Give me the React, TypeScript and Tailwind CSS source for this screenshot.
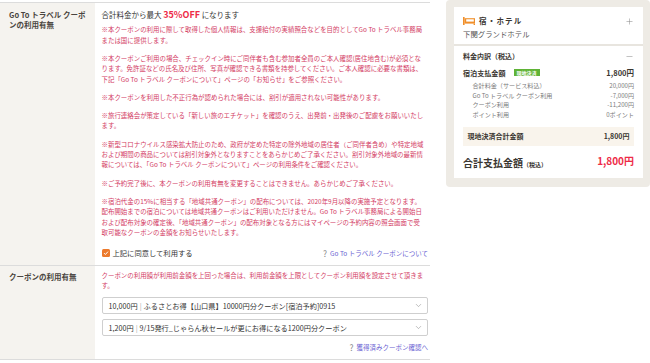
import { ChevronDown, Minus, Plus } from "lucide-react";

// Data
// -----------------------------------------------------------------------------

const notes: string[][] = [
  [
    "※本クーポンの利用に際して取得した個人情報は、支援給付の実績照合などを目的としてGo To トラベル事務局",
    "または国に提供します。",
  ],
  [
    "※本クーポンご利用の場合、チェックイン時にご同伴者も含む参加者全員のご本人確認(居住地含む)が必須とな",
    "ります。免許証などの氏名及び住所、写真が確認できる書類を持参してください。ご本人確認に必要な書類は、",
    "下記「Go To トラベル クーポンについて」ページの「お知らせ」をご参照ください。",
  ],
  ["※本クーポンを利用した不正行為が認められた場合には、割引が適用されない可能性があります。"],
  [
    "※旅行連絡会が策定している「新しい旅のエチケット」を確認のうえ、出発前・出発後のご配慮をお願いいたし",
    "ます。",
  ],
  [
    "※新型コロナウイルス感染拡大防止のため、政府が定めた特定の除外地域の居住者（ご同伴者含め）や特定地域",
    "および期間の商品については割引対象外となりますことをあらかじめご了承ください。割引対象外地域の最新情",
    "報については、「Go To トラベル クーポンについて」ページの利用条件をご確認ください。",
  ],
  ["※ご予約完了後に、本クーポンの利用有無を変更することはできません。あらかじめご了承ください。"],
  [
    "※宿泊代金の15%に相当する「地域共通クーポン」の配布については、2020年9月以降の実施予定となります。",
    "配布開始までの宿泊については地域共通クーポンはご利用いただけません。Go To トラベル事務局による開始日",
    "および配布対象の確定後、「地域共通クーポン」の配布対象となる方にはマイページの予約内容の照会画面で受",
    "取可能なクーポンの金額をお知らせいたします。",
  ],
];

const coupons = [
  { price: "10,000円", name: "ふるさとお得【山口県】10000円分クーポン[宿泊予約]0915" },
  { price: "1,200円", name: "9/15発行_じゃらん秋セールが更にお得になる1200円分クーポン" },
];

const breakdown = [
  ["合計料金（サービス料込）", "20,000円"],
  ["Go To トラベル クーポン利用", "-7,000円"],
  ["クーポン利用", "-11,200円"],
  ["ポイント利用", "0ポイント"],
];

// Pieces
// -----------------------------------------------------------------------------

function HelpLink({ label }: { label: string }) {
  return (
    <span className="flex items-center">
      <span className="mr-[3px] text-[8.5px] leading-[10px] text-[#8d8d8d]">?</span>
      <span className="text-[6.5px] leading-[10px] text-[#6b5fd3]">{label}</span>
    </span>
  );
}

function CouponSelect({ price, name }: { price: string; name: string }) {
  return (
    <div className="flex h-[17px] items-center justify-between rounded-[2px] border border-[#cfcfcf] pl-[6px] pr-[4px] text-[7.2px] text-[#333]">
      <span className="whitespace-nowrap">
        {price}
        <span className="mx-[2px] text-[#aaa]">|</span>
        {name}
      </span>
      <ChevronDown size={9} strokeWidth={1.5} className="text-[#8f8f8f]" />
    </div>
  );
}

function BedIcon() {
  return (
    <svg width="12" height="8" viewBox="0 0 12 8">
      <rect x="0" y="0" width="1.6" height="8" fill="#f08f2a" />
      <rect x="1.6" y="1.2" width="10.4" height="5.4" fill="#f08f2a" />
      <rect x="10.6" y="6.6" width="1.4" height="1.4" fill="#f08f2a" />
      <rect x="3.2" y="2.3" width="7.6" height="2.3" fill="#fff" />
    </svg>
  );
}

// Default export
// -----------------------------------------------------------------------------

export default function App() {
  return (
    <div className="flex h-[363px] w-[650px] overflow-hidden bg-white font-['Noto_Sans_CJK_JP','Noto_Sans',sans-serif] text-[#3a3631]">
      <div className="w-[430px] shrink-0 pt-[2px]">
        {/* Go To travel coupon */}
        <div className="flex border-t border-[#dcdcdc]">
          <div className="w-[95px] shrink-0 bg-[#f5f3ef] pl-[9px] pt-[7px] text-[7.5px] font-bold leading-[10px] text-[#4a4540]">
            Go To トラベル クーポ
            <br />
            ンの利用有無
          </div>
          <div className="flex-1 pb-[6px] pl-[6.5px] pr-[2px] pt-[6px]">
            <p className="text-[7.5px] leading-[12px] text-[#333]">
              合計料金から最大{" "}
              <span className="text-[9px] font-bold text-[#ee2b47]">35%OFF</span>{" "}
              になります
            </p>
            <div className="mt-[4.1px] text-[6.45px] leading-[10.4px] text-[#d33c64]">
              {notes.map((para, i) => (
                <p key={i} className={i > 0 ? "mt-[7.8px]" : ""}>
                  {para.map((line, j) => (
                    <span key={j} className="block whitespace-nowrap">
                      {line}
                    </span>
                  ))}
                </p>
              ))}
            </div>
            <div className="mt-[8.7px] flex h-[12px] items-center justify-between">
              <label className="flex items-center">
                <span className="flex h-[8px] w-[8px] items-center justify-center rounded-[1.5px] bg-[#ec7a2c]">
                  <svg width="6" height="6" viewBox="0 0 6 6">
                    <path d="M1 3.1l1.4 1.4L5 1.6" fill="none" stroke="#fff" strokeWidth="1" />
                  </svg>
                </span>
                <span className="ml-[3px] text-[7.3px] text-[#333]">上記に同意して利用する</span>
              </label>
              <HelpLink label="Go To トラベル クーポンについて" />
            </div>
          </div>
        </div>

        {/* Coupon */}
        <div className="flex border-y border-[#dcdcdc]">
          <div className="w-[95px] shrink-0 bg-[#f5f3ef] pl-[9px] pt-[5.7px] text-[7.5px] font-bold leading-[10px] text-[#4a4540]">
            クーポンの利用有無
          </div>
          <div className="flex-1 pb-[7.3px] pl-[6.5px] pr-[2px] pt-[4.6px]">
            <p className="text-[6.45px] leading-[10.4px] text-[#d33c64]">
              <span className="block whitespace-nowrap">
                クーポンの利用額が利用前金額を上回った場合は、利用前金額を上限としてクーポン利用額を設定させて頂きま
              </span>
              <span className="block">す。</span>
            </p>
            <div className="mt-[6px] flex flex-col gap-[5px]">
              {coupons.map((c) => (
                <CouponSelect key={c.price} price={c.price} name={c.name} />
              ))}
            </div>
            <div className="mt-[5.3px] flex justify-end">
              <HelpLink label="獲得済みクーポン確認へ" />
            </div>
          </div>
        </div>
      </div>

      {/* Summary */}
      <div className="ml-[16px] w-[204px] shrink-0 self-start rounded-[4px] bg-[#eeebe5] pb-[9px] pl-[8px] pr-[7px] pt-[7px]">
        <div className="bg-white">
          <div className="border-b-2 border-[#e8e5df] px-[9px] pb-[5px] pt-[8px]">
            <div className="flex h-[12px] items-center justify-between">
              <div className="flex items-center gap-[4px]">
                <BedIcon />
                <span className="text-[7.5px] font-bold tracking-[1.2px]">宿・ホテル</span>
              </div>
              <Plus size={9} strokeWidth={1.4} className="text-[#8a8a8a]" />
            </div>
            <p className="mt-[2px] text-[7.4px] leading-[10px] text-[#555]">下関グランドホテル</p>
          </div>

          <div className="px-[9px] pb-[11px] pt-[4.7px]">
            <div className="flex h-[12px] items-center justify-between">
              <span className="text-[7px] font-bold">料金内訳（税込）</span>
              <Minus size={9} strokeWidth={1.4} className="text-[#8a8a8a]" />
            </div>
            <div className="mt-[4.3px] flex h-[12px] items-center justify-between">
              <div className="flex items-center">
                <span className="text-[7.1px] font-bold">宿泊支払金額</span>
                <span className="ml-[8px] flex h-[7px] items-center bg-[#5fb336] px-[3px] text-[5px] font-bold text-white">
                  現地決済
                </span>
              </div>
              <span className="text-[7.5px] font-bold">1,800円</span>
            </div>
            <div className="mt-[2px] pl-[9.5px]">
              {breakdown.map(([label, value]) => (
                <div
                  key={label}
                  className="flex justify-between text-[6.1px] leading-[9.7px] text-[#7a7a7a]"
                >
                  <span>{label}</span>
                  <span>{value}</span>
                </div>
              ))}
            </div>
            <div className="mt-[7px] flex h-[19px] items-center justify-between bg-[#f9f4ec] px-[4.5px] text-[7px] font-bold">
              <span>現地決済合計金額</span>
              <span>1,800円</span>
            </div>
            <div className="mt-[7.3px] flex h-[14px] items-center justify-between">
              <span className="font-bold">
                <span className="text-[10px]">合計支払金額</span>
                <span className="text-[6px]">（税込）</span>
              </span>
              <span className="text-[10px] font-bold text-[#ee2b47]">1,800円</span>
            </div>
          </div>
        </div>
      </div>
    </div>
  );
}
